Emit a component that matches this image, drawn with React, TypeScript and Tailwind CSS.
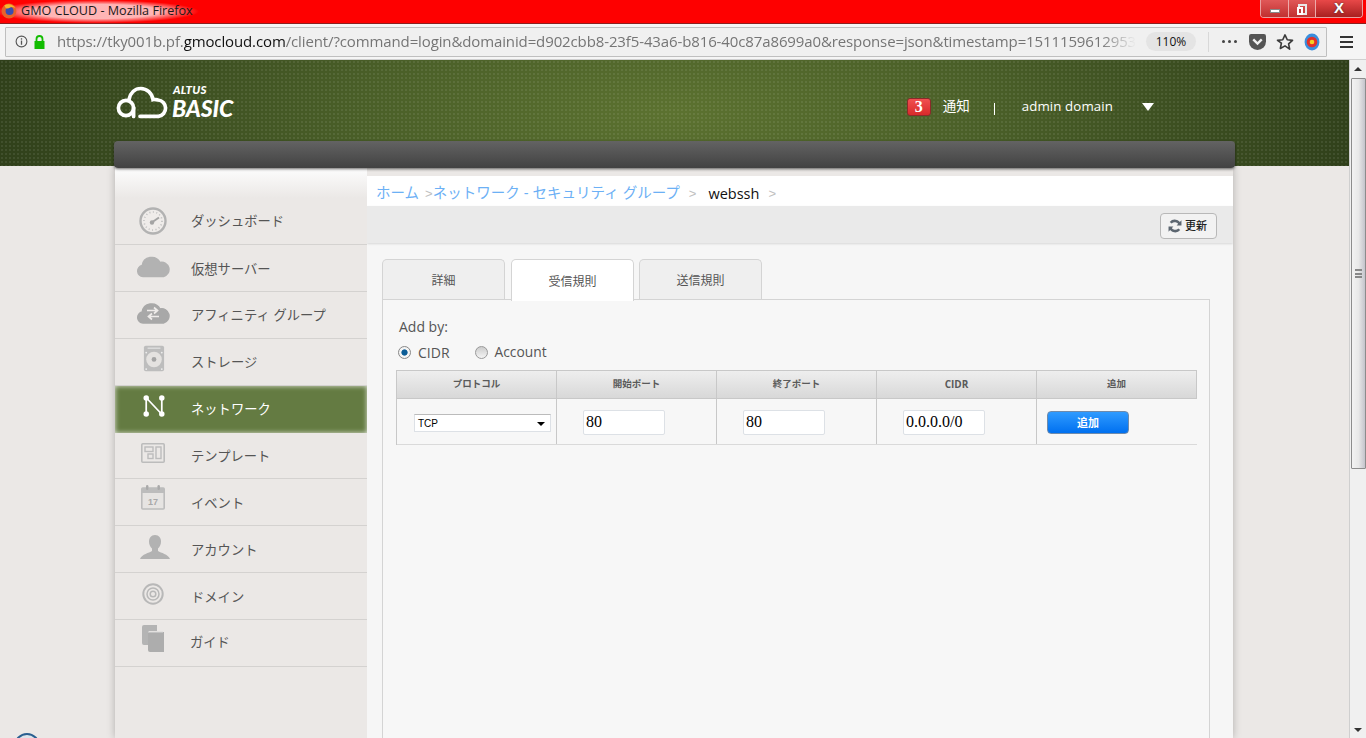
import React from "react";

const jp = "font-['Liberation_Sans','Noto_Sans_CJK_JP',sans-serif]";

function Dash() {
  return (
    <svg width="28" height="28" viewBox="0 0 28 28">
      <circle cx="14" cy="14" r="12.500" fill="#efecea" stroke="#b2b2b2" strokeWidth="2.400" />
      <circle cx="14" cy="14" r="9" fill="none" stroke="#bdbdbd" strokeWidth="1.600" strokeDasharray="1 2.500" />
      <path d="M12 16 L20 10.500" stroke="#a4a4a4" strokeWidth="2" />
      <circle cx="13" cy="15.500" r="2.200" fill="#a4a4a4" />
    </svg>
  );
}
function Cloud() {
  return (
    <svg width="34" height="24" viewBox="0 0 34 24">
      <path d="M7 22.500a5.500 5.500 0 0 1-.8-10.900A9.500 9.500 0 0 1 24 8.500a7 7 0 0 1 3.500 14Z" fill="#b2b2b2" stroke="#b2b2b2" strokeWidth="1.500" />
    </svg>
  );
}
function CloudSwap() {
  return (
    <svg width="34" height="24" viewBox="0 0 34 24">
      <path d="M7 22a5.500 5.500 0 0 1-.8-10.900A9.500 9.500 0 0 1 24 8a7 7 0 0 1 3.500 14Z" fill="#a8a8a8" stroke="#a8a8a8" strokeWidth="1.500" />
      <path d="M11 9.500h9M18 6.500l3.500 3-3.500 3M23 15.500h-9M16 12.500l-3.500 3 3.500 3" fill="none" stroke="#efecea" strokeWidth="1.700" />
    </svg>
  );
}
function Disk() {
  return (
    <svg width="22" height="29" viewBox="0 0 24 30">
      <rect x="1" y="1" width="22" height="28" rx="2" fill="#bdbdbd" />
      <circle cx="12" cy="16" r="8.500" fill="#e4e2e0" />
      <circle cx="12" cy="16" r="2.600" fill="#a4a4a4" />
      <rect x="5" y="3" width="14" height="1.500" fill="#dedede" />
      <circle cx="3.500" cy="26.500" r="1" fill="#eee" />
      <circle cx="20.500" cy="26.500" r="1" fill="#eee" />
      <circle cx="3.500" cy="8.500" r="1" fill="#eee" />
      <circle cx="20.500" cy="8.500" r="1" fill="#eee" />
    </svg>
  );
}
function Net() {
  return (
    <svg width="22" height="22" viewBox="0 0 24 24">
      <path d="M3.500 3v18M3.500 3l17 18M20.500 3v18" stroke="#fff" strokeWidth="1.900" fill="none" />
      <circle cx="3.500" cy="3.300" r="3" fill="#fff" />
      <circle cx="20.500" cy="3.300" r="3" fill="#fff" />
      <circle cx="3.500" cy="20.700" r="3" fill="#fff" />
      <circle cx="20.500" cy="20.700" r="3" fill="#fff" />
    </svg>
  );
}
function Tpl() {
  return (
    <svg width="24" height="20" viewBox="0 0 24 20">
      <rect x="0.800" y="0.800" width="22.400" height="18.400" rx="1" fill="none" stroke="#bcbcbc" strokeWidth="1.600" />
      <rect x="4" y="4" width="8" height="4.500" fill="none" stroke="#bcbcbc" strokeWidth="1.400" />
      <rect x="7" y="11" width="5" height="4.500" fill="none" stroke="#bcbcbc" strokeWidth="1.400" />
      <rect x="15" y="4" width="5" height="11.500" fill="none" stroke="#bcbcbc" strokeWidth="1.400" />
    </svg>
  );
}
function Cal() {
  return (
    <svg width="24" height="25" viewBox="0 0 24 25" className="overflow-visible">
      <rect x="0.800" y="3" width="22.400" height="21" rx="1" fill="#e6e4e2" stroke="#bcbcbc" strokeWidth="1.600" />
      <rect x="1" y="3" width="22" height="5" fill="#bcbcbc" />
      <rect x="5" y="0" width="2.400" height="5" rx="1.200" fill="#aaa" />
      <rect x="16.500" y="0" width="2.400" height="5" rx="1.200" fill="#aaa" />
      <text x="12" y="20" textAnchor="middle" fontSize="9" fontWeight="700" fill="#a8a8a8" fontFamily="Liberation Sans">17</text>
    </svg>
  );
}
function User() {
  return (
    <svg width="30" height="24" viewBox="0 0 30 24">
      <path d="M15 0c4 0 6 3 6 6.500 0 3-1.300 5.500-3 7v2.500c3 2 10 3 12 8H0c2-5 9-6 12-8v-2.500c-1.700-1.500-3-4-3-7C9 3 11 0 15 0Z" fill="#b2b2b2" />
    </svg>
  );
}
function Target() {
  return (
    <svg width="22" height="22" viewBox="0 0 22 22">
      <circle cx="11" cy="11" r="9.700" fill="none" stroke="#b8b8b8" strokeWidth="2" />
      <circle cx="11" cy="11" r="6" fill="none" stroke="#b8b8b8" strokeWidth="1.500" />
      <circle cx="11" cy="11" r="2.800" fill="none" stroke="#b8b8b8" strokeWidth="1.500" />
    </svg>
  );
}
function Books() {
  return (
    <svg width="24" height="28" viewBox="0 0 24 28">
      <path d="M1 2a2 2 0 0 1 2-2h13v6H8v14H3a2 2 0 0 1-2-2Z" fill="#b4b4b4" />
      <path d="M7 7h16v20H9a2 2 0 0 1-2-2Z" fill="#adadad" />
      <path d="M7 7h15" stroke="#dadada" strokeWidth="1" />
    </svg>
  );
}

const nav: { label: string; icon: React.ReactNode; active?: boolean; h: string; ic: string; t: string }[] = [
  { label: "ダッシュボード", icon: <Dash />, h: "h-[47px]", ic: "pb-[1px]", t: "pt-[2px]" },
  { label: "仮想サーバー", icon: <Cloud />, h: "h-[47px]", ic: "pb-[5px]", t: "pt-[4px]" },
  { label: "アフィニティ グループ", icon: <CloudSwap />, h: "h-[47px]", ic: "pb-[5px]", t: "pt-[2px]" },
  { label: "ストレージ", icon: <Disk />, h: "h-[47px]", ic: "pb-[7px] pl-[2px]", t: "pt-[2px]" },
  { label: "ネットワーク", icon: <Net />, active: true, h: "h-[47px]", ic: "pb-[7px] pl-[2px]", t: "pt-0" },
  { label: "テンプレート", icon: <Tpl />, h: "h-[46px]", ic: "pb-[5px]", t: "pt-[2px]" },
  { label: "イベント", icon: <Cal />, h: "h-[47px]", ic: "pb-[9px]", t: "pt-[4px]" },
  { label: "アカウント", icon: <User />, h: "h-[47px]", ic: "pb-[5px] pl-[4px]", t: "pt-[4px]" },
  { label: "ドメイン", icon: <Target />, h: "h-[47px]", ic: "pb-[5px]", t: "pt-[4px]" },
  { label: "ガイド", icon: <Books />, h: "h-[47px]", ic: "pb-[9px]", t: "pt-0 -ml-[1px]" },
];

function TitleBar() {
  return (
    <div className="h-[24px] bg-[#fe0000] flex items-start relative shrink-0 border-b border-[#8a2020]">
      <div className="absolute -left-[6px] top-0 h-[23px] w-[205px] bg-[radial-gradient(closest-side,#ffc0c0f0_62%,#ff000000_100%)]" />
      <div className="relative flex items-center h-[22px] pl-[1px]">
        <svg width="16" height="16" viewBox="0 0 14 14" className="mr-[4px]">
          <circle cx="7" cy="7" r="6.500" fill="#e8622a" />
          <circle cx="7.500" cy="7" r="3.500" fill="#3a4db0" />
          <path d="M3 2c3-2 8-1 10 3-1-1-3-2-5-1s-4 2-5-2Z" fill="#f7b52c" />
        </svg>
        <span className="text-[12.600px] text-[#1a1a1a] font-['Open_Sans',sans-serif]">GMO CLOUD - Mozilla Firefox</span>
      </div>
      <div className="ml-auto mr-[3px] flex h-[18px] w-[103px] border border-t-0 border-[#e8a0a0] rounded-b-[4px] overflow-hidden text-white relative">
        <div className="w-[28px] flex items-center justify-center bg-[linear-gradient(#e05858,#c03030)] border-r border-[#eaa]">
          <div className="w-[10px] h-[4px] bg-white border border-[#888] mt-[5px]" />
        </div>
        <div className="w-[27px] flex items-center justify-center bg-[linear-gradient(#e05858,#c03030)] border-r border-[#eaa]">
          <div className="relative w-[9px] h-[11px] border-2 border-[#e8e8e8] mt-[2px] ml-[1px]">
            <div className="absolute -left-[3px] top-[1px] w-[6px] h-[8px] border-2 border-white bg-[#c04040]" />
          </div>
        </div>
        <div className="flex-1 flex items-center justify-center bg-[linear-gradient(#e84848,#a82020)] text-[15px] font-bold font-['Liberation_Sans',sans-serif] [text-shadow:0_0_2px_#333]">X</div>
      </div>
    </div>
  );
}

function AddressBar() {
  return (
    <div className="h-[36px] bg-[#f5f5f5] flex items-center shrink-0 pl-[5px] border-b border-[#d0d0d0]">
      <div className="w-[1322px] h-[30px] bg-[#f0f0f0] border border-[#bfbfbf] flex items-center text-[15px] font-['Open_Sans',sans-serif] overflow-hidden shrink-0 rounded-[1px]">
        <svg width="13" height="13" viewBox="0 0 14 14" className="ml-[9px] shrink-0">
          <circle cx="7" cy="7" r="5.800" fill="none" stroke="#555" strokeWidth="1.200" />
          <rect x="6.300" y="6" width="1.400" height="4.500" fill="#555" />
          <rect x="6.300" y="3.500" width="1.400" height="1.500" fill="#555" />
        </svg>
        <svg width="13" height="14" viewBox="0 0 13 14" className="ml-[5px] mr-[11px] shrink-0">
          <rect x="1.500" y="6" width="10" height="8" fill="#12bc00" />
          <path d="M3.500 6V4a3 3 0 0 1 6 0v2" fill="none" stroke="#12bc00" strokeWidth="1.800" />
        </svg>
        <span className="whitespace-nowrap text-[#757575] w-[1079px] overflow-hidden shrink-0 tracking-[-0.120px] [mask-image:linear-gradient(to_left,transparent,black_36px)]">
          https://tky001b.pf.<span className="text-[#111]">gmocloud.com</span>/client/?command=login&amp;domainid=d902cbb8-23f5-43a6-b816-40c87a8699a0&amp;response=json&amp;timestamp=1511159612953
        </span>
        <span className="ml-[10px] w-[50px] h-[19px] rounded-full bg-[#e4e4e4] text-[12px] text-[#111] flex items-center justify-center shrink-0">110%</span>
        <div className="w-px h-[20px] bg-[#d8d8d8] ml-[12px] shrink-0" />
        <span className="ml-[13px] flex gap-[3px] shrink-0">
          <i className="w-[3px] h-[3px] rounded-full bg-[#444] block" />
          <i className="w-[3px] h-[3px] rounded-full bg-[#444] block" />
          <i className="w-[3px] h-[3px] rounded-full bg-[#444] block" />
        </span>
        <svg width="17" height="16" viewBox="0 0 16 15" className="ml-[12px] shrink-0">
          <path d="M0 2a2 2 0 0 1 2-2h12a2 2 0 0 1 2 2v5a8 8 0 0 1-16 0Z" fill="#555" />
          <path d="M4 5l4 4 4-4" fill="none" stroke="#f0f0f0" strokeWidth="2.200" />
        </svg>
        <svg width="18" height="18" viewBox="0 0 24 24" className="ml-[10px] shrink-0">
          <path d="M12 2.500l3 6.500 7 .8-5.200 4.800 1.400 7L12 17.200 5.800 20.600l1.400-7L2 9.800 9 9Z" fill="none" stroke="#3c3c3c" strokeWidth="2.200" strokeLinejoin="round" />
        </svg>
        <svg width="16" height="18" viewBox="0 0 15 17" className="ml-[10px] shrink-0">
          <ellipse cx="7.500" cy="8.500" rx="7" ry="8" fill="#3a8ede" />
          <circle cx="7.500" cy="8.500" r="5" fill="#e0322c" />
          <circle cx="7.500" cy="8.500" r="2.200" fill="#f5d020" />
        </svg>
      </div>
      <div className="ml-[13px] flex flex-col gap-[3px] w-[13px]">
        <i className="h-[2px] bg-[#333] block" />
        <i className="h-[2px] bg-[#333] block" />
        <i className="h-[2px] bg-[#333] block" />
      </div>
    </div>
  );
}

function Logo() {
  return (
    <div className="flex items-end">
      <svg width="55" height="33" viewBox="0 0 55 33" className="-ml-[1px]">
        <circle cx="10" cy="22" r="7.600" fill="none" stroke="#fff" strokeWidth="3.700" />
        <path d="M17.600 21.500V30.500M13 13.500C14.500 6.500 19 2.500 24.700 2.500C31 2.500 36 7 37 13.500C38.500 13 40.500 13.500 42 14A8.200 8.200 0 0 1 42.500 30.300H24" fill="none" stroke="#fff" strokeWidth="3.700" strokeLinecap="round" />
      </svg>
      <div className="relative text-white font-['Lato',sans-serif] italic leading-none ml-[1px]">
        <div className="absolute bottom-[calc(100%+5px)] left-[1px] text-[11.500px] leading-[10px] tracking-[0.2px] font-black">ALTUS</div>
        <div className="text-[23px] tracking-[-0.100px] font-black leading-[16px] mb-[3px]">BASIC</div>
      </div>
    </div>
  );
}

function Header() {
  return (
    <div className="h-[106px] shrink-0 bg-[radial-gradient(ellipse_700px_230px_at_center,#5c7230_0%,#4a5f28_45%,#2f3f1a_100%)] relative flex items-start pl-[117px]">
      <div className="absolute inset-0 bg-[radial-gradient(#ffffff14_0.8px,transparent_1px)] bg-[length:4px_4px]" />
      <div className="relative mt-[26px]"><Logo /></div>
      <div className={`relative ml-auto mr-[195px] mt-[38px] h-[18px] flex items-center text-white ${jp}`}>
        <span className="w-[24px] h-[18px] rounded-[3px] bg-[linear-gradient(#f15050,#d82a2a)] border border-[#8a2a2a] text-[16px] font-bold flex items-center justify-center font-['Liberation_Serif',serif] leading-none">3</span>
        <span className="ml-[12px] text-[13.500px]">通知</span>
        <span className="ml-[24px] w-px h-[12px] bg-white mt-[4px]" />
        <span className="ml-[27px] text-[13.300px] font-['Open_Sans',sans-serif] tracking-[0.1px]">admin domain</span>
        <span className="ml-[29px] w-0 h-0 border-x-[6px] border-x-transparent border-t-[8px] border-t-white" />
      </div>
    </div>
  );
}

function Th({ children, border = true }: { children: React.ReactNode; border?: boolean }) {
  return (
    <div className={`${border ? "w-[160px] border-r border-[#c8c8c8]" : "w-[159px]"} shrink-0 h-full flex items-center justify-center text-[9.500px] font-bold text-[#5a5a5a] ${jp}`}>
      {children}
    </div>
  );
}

function Field({ v }: { v: string }) {
  return (
    <div className="w-[82px] h-[25px] mt-[1px] bg-white border border-[#dde1e6] rounded-[2px] flex items-center pl-[2px] text-[16px] text-black font-['Liberation_Serif',serif]">
      {v}
    </div>
  );
}

function Tab({ label, active }: { label: string; active?: boolean }) {
  return (
    <div
      className={
        active
          ? `w-[123px] h-[42px] -mb-[2px] pt-[2px] relative z-10 bg-white border border-b-0 border-[#d4d4d4] rounded-t-[5px] flex items-center justify-center text-[12px] text-[#555] ${jp}`
          : `w-[123px] h-[40px] pt-[3px] bg-[#efefef] border border-b-0 border-[#d4d4d4] rounded-t-[5px] flex items-center justify-center text-[12px] text-[#555] ${jp}`
      }
    >
      {label}
    </div>
  );
}

function Main() {
  return (
    <div className="w-[866px] flex flex-col bg-[#f6f6f6] shrink-0 h-full overflow-hidden">
      <div className="h-[10px] bg-[linear-gradient(#d4d1cf,#ebe8e6_60%)] shrink-0" />
      <div className={`h-[30px] bg-white flex items-center pl-[9px] pt-[5px] text-[14.500px] shrink-0 whitespace-nowrap ${jp}`}>
        <span className="text-[#6cb0f5]">ホーム</span>
        <span className="text-[#c0c0c0] text-[13px] ml-[6px]">&gt;</span>
        <span className="text-[#6cb0f5]">ネットワーク - セキュリティ グループ</span>
        <span className="text-[#c0c0c0] text-[13px] ml-[9px]">&gt;</span>
        <span className="text-[#111] ml-[12px] text-[14.500px] font-['Open_Sans',sans-serif]">webssh</span>
        <span className="text-[#c0c0c0] text-[13px] ml-[9px]">&gt;</span>
      </div>
      <div className="h-[37px] bg-[#eaeaea] shrink-0 flex items-center justify-end pr-[16px] shadow-[0_1px_2px_#0000001f]">
        <div className={`w-[57px] h-[26px] bg-[#f2f2f2] border border-[#b8b8b8] rounded-[4px] flex items-center justify-center gap-[3px] text-[11px] font-medium text-[#222] mt-[3px] pr-[2px] ${jp}`}>
          <svg width="14" height="14" viewBox="0 0 13 13">
            <path d="M11 5A5 5 0 0 0 2.500 3.500M2 8a5 5 0 0 0 8.500 1.500" fill="none" stroke="#5c6670" strokeWidth="2.400" />
            <path d="M12.500 1.200V6H8ZM.5 11.800V7H5Z" fill="#5c6670" />
          </svg>
          更新
        </div>
      </div>
      <div className="flex-1 pl-[15px] pt-[16px] w-[843px] flex flex-col">
        <div className="flex items-start">
          <Tab label="詳細" />
          <div className="ml-[6px]"><Tab label="受信規則" active /></div>
          <div className="ml-[5px]"><Tab label="送信規則" /></div>
        </div>
        <div className="flex-1 border border-[#d4d4d4] border-b-0 pl-[13px] pr-[12px] pt-[18px] bg-[#f7f7f7]">
          <div className="text-[14px] leading-[18px] text-[#555] font-['Open_Sans',sans-serif] ml-[3px]">Add by:</div>
          <div className="flex items-center mt-[7px] h-[18px] text-[14px] text-[#555] font-['Open_Sans',sans-serif] ml-[2px]">
            <span className="w-[13px] h-[13px] rounded-full border border-[#888] bg-[radial-gradient(circle,#0b5c96_0,#0b5c96_35%,#f4f4f4_45%)]" />
            <span className="ml-[7px]">CIDR</span>
            <span className="ml-[25px] w-[13px] h-[13px] rounded-full border border-[#999] bg-[linear-gradient(#ccc,#f4f4f4)]" />
            <span className="ml-[7px] text-[13.800px]">Account</span>
          </div>
          <div className="mt-[9px] w-[801px] border-l border-[#c8c8c8]">
            <div className="h-[29px] flex border-y border-r border-[#c8c8c8] bg-[linear-gradient(#eeeeee,#d8d8d8)]">
              <Th>プロトコル</Th>
              <Th>開始ポート</Th>
              <Th>終了ポート</Th>
              <Th><span className="font-['Open_Sans',sans-serif] text-[10px]">CIDR</span></Th>
              <Th border={false}>追加</Th>
            </div>
            <div className="h-[46px] flex border-b border-[#dadada]">
              <div className="w-[160px] shrink-0 h-full border-r border-[#c8c8c8] flex items-center pl-[17px]">
                <div className="w-[137px] h-[18px] mt-[2px] pt-[1px] bg-white border border-[#dde1e6] border-t-[#bbb] flex items-center pl-[3px] text-[10px] text-black font-['Liberation_Sans',sans-serif] relative">
                  TCP
                  <span className="absolute right-[5px] top-[7px] w-0 h-0 border-x-[4px] border-x-transparent border-t-[4px] border-t-black" />
                </div>
              </div>
              <div className="w-[160px] shrink-0 h-full border-r border-[#c8c8c8] flex items-center pl-[26px]"><Field v="80" /></div>
              <div className="w-[160px] shrink-0 h-full border-r border-[#c8c8c8] flex items-center pl-[26px]"><Field v="80" /></div>
              <div className="w-[160px] shrink-0 h-full border-r border-[#c8c8c8] flex items-center pl-[26px]"><Field v="0.0.0.0/0" /></div>
              <div className="w-[159px] shrink-0 h-full flex items-center pl-[10px]">
                <div className={`w-[82px] h-[23px] mt-[1px] pt-[2px] rounded-[4px] border border-[#6f8bab] bg-[linear-gradient(#2f9bff,#0070f0)] text-white text-[11px] font-bold flex items-center justify-center ${jp}`}>追加</div>
              </div>
            </div>
          </div>
        </div>
      </div>
    </div>
  );
}

function Sidebar() {
  return (
    <div className={`w-[252px] shrink-0 h-full bg-[#ebe8e6] flex flex-col ${jp}`}>
      <div className="h-[32px] shrink-0 bg-[linear-gradient(#ebe8e6,#fbfbfb_14%,#ebe8e6)]" />
      {nav.map((n) => (
        <div
          key={n.label}
          className={
            n.active
              ? `${n.h} shrink-0 flex items-center bg-[#647b42] shadow-[inset_0_0_5px_#e4e8dc] text-white`
              : `${n.h} shrink-0 flex items-center border-b border-[#d4d2d0] text-[#555]`
          }
        >
          <div className={`w-[76px] flex justify-center shrink-0 ${n.ic}`}>{n.icon}</div>
          <span className={`text-[13.300px] whitespace-nowrap ${n.t}`}>{n.label}</span>
        </div>
      ))}
    </div>
  );
}

export default function App() {
  return (
    <div className="w-[1366px] h-[738px] overflow-hidden flex flex-col bg-[#ebe8e6]">
      <TitleBar />
      <AddressBar />
      <div className="flex-1 flex min-h-0 relative">
        <div className="w-[1349px] shrink-0 flex flex-col">
          <Header />
          <div className="flex-1 relative flex pl-[115px] min-h-0 bg-[#ebe8e6]">
            <div className="flex flex-1 min-h-0 shadow-[0_0_8px_#00000040] w-[1118px] grow-0 relative">
              <Sidebar />
              <Main />
            </div>
            <div className="absolute left-[114px] -top-[25px] w-[1121px] h-[27px] rounded-[4px] bg-[linear-gradient(#636363,#424242)] shadow-[0_1px_3px_#0000008c]" />
          </div>
        </div>
        <div className="w-[17px] shrink-0 bg-[#f0f0f0] border-l border-[#cfcfcf] flex flex-col items-center relative">
          <div className="h-[18px] w-full flex items-center justify-center">
            <span className="w-0 h-0 border-x-[4px] border-x-transparent border-b-[4px] border-b-[#333]" />
          </div>
          <div className="w-[15px] h-[391px] border border-[#8c8c8c] rounded-[1px] bg-[linear-gradient(to_right,#f2f2f2,#e8e8e8_50%,#c4c4cc)] flex items-center justify-center">
            <div className="w-[7px] h-[9px] border-y-2 border-[#888] relative">
              <div className="absolute left-0 right-0 top-[1.500px] h-[2px] bg-[#888]" />
            </div>
          </div>
          <div className="mt-auto h-[17px] w-full flex items-center justify-center">
            <span className="w-0 h-0 border-x-[4px] border-x-transparent border-t-[4px] border-t-[#333]" />
          </div>
        </div>
        <div className="absolute left-[14px] top-[673px] w-[26px] h-[26px] rounded-full border-2 border-[#2a5f90] bg-[linear-gradient(#dfe6ec,#b8c8d4)]" />
      </div>
    </div>
  );
}
